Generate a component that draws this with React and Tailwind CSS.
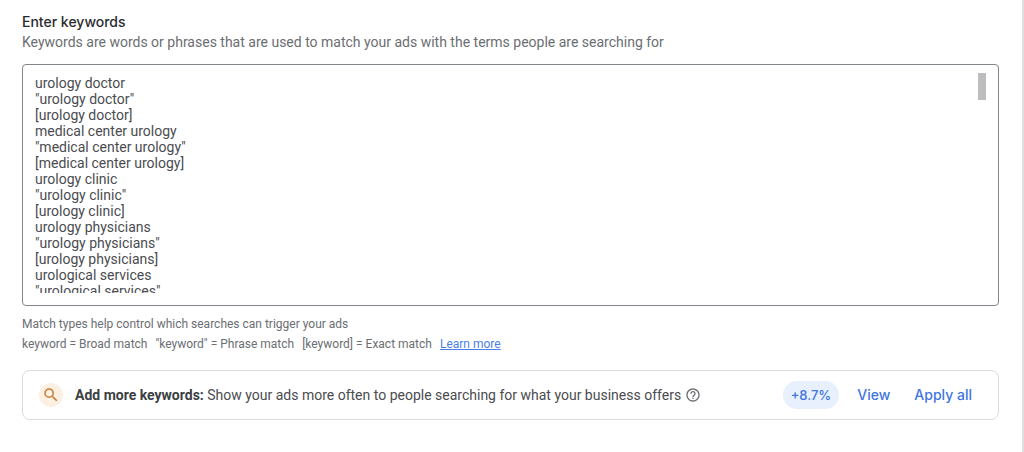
import { useState } from "react";

const KEYWORDS = ["urology doctor", "medical center urology", "urology clinic", "urology physicians", "urological services"];

export default function App() {
  const [keywords, setKeywords] = useState(
    KEYWORDS.map((k) => `${k}\n"${k}"\n[${k}]`).join("\n")
  );

  return (
    <main className="min-h-screen border-r-2 border-[#e0e0e0] bg-white pl-[22px] pr-[23px] pt-3 pb-8 font-[Roboto,sans-serif] text-[#6b6e72]">
      <label htmlFor="keywords" className="block text-sm leading-5 font-medium font-[Inter,sans-serif] text-[#2a2b2e]">
        Enter keywords
      </label>
      <p className="text-sm leading-5">
        Keywords are words or phrases that are used to match your ads with the terms people are searching for
      </p>

      {/* Keyword box */}
      <div className="relative mt-3 rounded border border-[#80868b] px-3 pt-2.5 pb-3">
        <textarea
          id="keywords"
          value={keywords}
          onChange={(e) => setKeywords(e.target.value)}
          className="block h-[218px] w-full resize-none overflow-y-auto text-sm leading-4 text-[#4a4c50] outline-none [scrollbar-width:none]"
        />
        <div className="pointer-events-none absolute top-2 right-3 h-[27px] w-2 bg-[#bdbdbd]" />
      </div>

      <p className="mt-2 text-xs leading-5">Match types help control which searches can trigger your ads</p>
      <p className="flex flex-wrap gap-x-2 text-xs leading-5">
        <span>keyword = Broad match</span>
        <span>"keyword" = Phrase match</span>
        <span>[keyword] = Exact match</span>
        <a href="#learn-more" className="text-[#4a7fe8] underline">Learn more</a>
      </p>

      {/* Recommendation */}
      <section className="mt-4 flex items-center rounded-lg border border-[#dadce0] py-2.5 pl-4 pr-[26px] text-sm text-[#4a4c50]">
        <span className="mr-3 flex size-6 shrink-0 items-center justify-center rounded-full bg-[#fcf0e3]">
          <SearchIcon />
        </span>
        <p>
          <strong className="font-bold text-[#3c4043]">Add more keywords:</strong> Show your ads more often to people searching for what your business offers
        </p>
        <button type="button" aria-label="Help" className="ml-1 shrink-0">
          <HelpIcon />
        </button>
        <div className="ml-auto flex shrink-0 items-center font-medium font-[Inter,sans-serif] text-[#4175df]">
          <span className="rounded-full bg-[#e8f0fe] px-2 py-1 text-[13px] leading-5">+8.7%</span>
          <button type="button" className="ml-[18px]">View</button>
          <button type="button" className="ml-6">Apply all</button>
        </div>
      </section>
    </main>
  );
}

function SearchIcon() {
  return (
    <svg className="size-[18px]" viewBox="0 0 24 24" fill="#c97a35">
      <path d="M15.5 14h-.79l-.28-.27A6.47 6.47 0 0016 9.5 6.5 6.5 0 109.5 16c1.61 0 3.09-.59 4.23-1.57l.27.28v.79l5 4.99L20.49 19l-4.99-5zm-6 0C7.01 14 5 11.99 5 9.5S7.01 5 9.5 5 14 7.01 14 9.5 11.99 14 9.5 14z" />
    </svg>
  );
}

function HelpIcon() {
  return (
    <svg className="block size-4" viewBox="0 0 24 24" fill="#6b6e72">
      <path d="M11 18h2v-2h-2v2zm1-16C6.48 2 2 6.48 2 12s4.48 10 10 10 10-4.48 10-10S17.52 2 12 2zm0 18c-4.41 0-8-3.59-8-8s3.59-8 8-8 8 3.59 8 8-3.59 8-8 8zm0-14c-2.21 0-4 1.79-4 4h2c0-1.1.9-2 2-2s2 .9 2 2c0 2-3 1.75-3 5h2c0-2.25 3-2.5 3-5 0-2.21-1.79-4-4-4z" />
    </svg>
  );
}
